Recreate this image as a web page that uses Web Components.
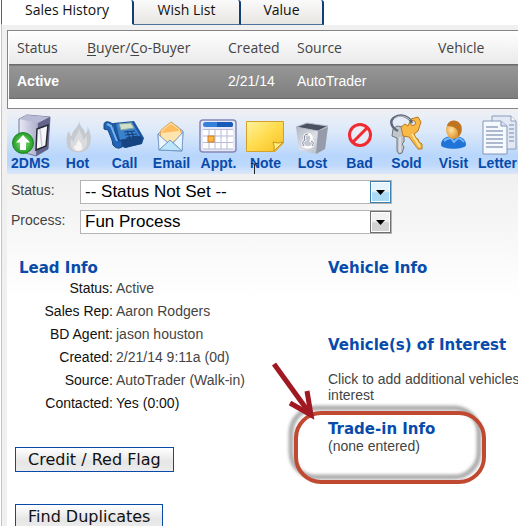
<!DOCTYPE html>
<html lang="en">
<head>
<meta charset="utf-8">
<title>Sales History</title>
<style>
html, body { margin: 0; height: 100%; }
body { overflow: hidden; background: #fff; font: 14px/16px "Liberation Sans", Arial, sans-serif; color: #444; }
</style>
</head>
<body>
<crm-page></crm-page>

<script>
const define = (name, html, setup) => customElements.define(name, class extends HTMLElement {
  constructor() {
    super();
    const t = document.createElement('template');
    t.innerHTML = html;
    this.attachShadow({ mode: 'open' }).append(t.content.cloneNode(true));
  }
  connectedCallback() { if (setup) setup(this, this.shadowRoot); }
});

define('crm-tab', `
<style>
  :host { display: block; }
  button { display: block; height: 25px; width: 100%; padding: 0 0 5px; border: solid #0f3f74; border-width: 0 2px 1px 0;
    border-bottom-color: #4c7299; border-radius: 0 3px 0 0; background: linear-gradient(#fafafa, #e8e6e2);
    font: 14px/19px "Open Sans", "Noto Sans", sans-serif; color: #111; }
  :host([selected]) button { background: #fff; border-bottom-color: #fff; border-left: 1px solid #3c6a98; }
</style>
<button type="button" role="tab"><slot></slot></button>`,
(h, r) => r.querySelector('button').setAttribute('aria-selected', h.hasAttribute('selected')));

define('crm-tabs', `
<style>
  :host { display: grid; grid-template-columns: 133px 107px 83px; padding-left: 1px; background: #fff; }
</style>
<slot></slot>`);

define('lead-table', `
<style>
  :host { display: block; border: solid #858585; border-width: 1px 0 1px 1px; background: #fff; padding: 0 0 9px 1px; }
  table { width: 100%; border-collapse: collapse; table-layout: fixed; text-align: left; }
  th, td { padding: 0 0 0 8px; white-space: nowrap; }
  th { height: 32px; font: 14px/20px "Open Sans", "Noto Sans", sans-serif; color: #444; padding-top: 1px; }
  thead { background: linear-gradient(#fff, #e9e9e9); }
  tbody { background: linear-gradient(#969696, #7e7e7e); color: #fff; border: solid #6c6c6c; border-width: 1px 0; }
  td { height: 31px; padding-bottom: 2px; }
  .s { width: 62px; } .b { width: 133px; } .c { width: 61px; }
  u { text-underline-offset: 2px; }
</style>
<table>
  <thead><tr><th class="s">Status</th><th class="b"><u>B</u>uyer/<u>C</u>o-Buyer</th><th class="c">Created</th><th class="b">Source</th><th>Vehicle</th></tr></thead>
  <tbody><tr><td><b>Active</b></td><td></td><td>2/21/14</td><td>AutoTrader</td><td></td></tr></tbody>
</table>`);

define('tool-bar', `
<style>
  :host { display: grid; grid-template-columns: repeat(10, 47px) 41px; overflow: hidden; padding: 2px 0 3px;
    background: linear-gradient(#f0f1f4, #dce9fa 35%, #b8d6fc 72%, #bcd8fc 86%, #dbe7f7); }
</style>
<slot></slot>`);

define('tool-item', `
<style>
  :host { display: block; position: relative; }
  button { display: flex; flex-direction: column; align-items: center; width: 100%; padding: 0; border: 0; background: none;
    font: bold 14px/16px "Liberation Sans", Arial, sans-serif; color: #084bab; white-space: nowrap; }
  .i { height: 44px; align-self: flex-start; }
</style>
<button type="button"><span class="i"><slot name="icon"></slot></span><span><slot></slot></span></button>
<slot name="over"></slot>`);

define('pick-list', `
<style>
  :host { display: grid; grid-template-columns: 69px minmax(0, 312px); align-items: start; }
  label { padding-top: 2px; }
  .box { position: relative; display: block; }
  select { appearance: none; display: block; box-sizing: border-box; width: 100%; height: 24px; margin: 0; padding: 0 24px 0 4px;
    border: 1px solid #b4b4b4; border-radius: 0; background: #fff; font: 17px/22px "Liberation Sans", Arial, sans-serif; color: #000; }
  .arrow { position: absolute; right: 1px; top: 1px; bottom: 1px; width: 21px; box-sizing: border-box; border: 1px solid #6f6f6f;
    box-shadow: inset 0 0 0 1px #fff; background: linear-gradient(#f2f2f2 45%, #d2d2d2 55%); pointer-events: none;
    display: flex; align-items: center; justify-content: center; }
  :host([hot]) .arrow { border-color: #3c7fb1; background: linear-gradient(#e6f5fd 45%, #a9dbf6 55%); }
</style>
<label for="s"></label>
<span class="box"><select id="s"><option></option></select>
<span class="arrow"><svg width="9" height="5" viewBox="0 0 9 5"><path d="M0 0h9L4.500 5z" fill="#000"/></svg></span></span>`,
(h, r) => { r.querySelector('label').textContent = h.getAttribute('label'); r.querySelector('option').textContent = h.getAttribute('value'); });

define('info-section', `
<style>
  :host { display: block; }
  h2 { margin: 0; font: bold 15px/18px "DejaVu Sans", Verdana, sans-serif; color: #084bab; white-space: nowrap; }
</style>
<h2><slot name="title"></slot></h2><slot></slot>`);

define('lead-fields', `
<style>
  :host { display: block; }
  dl { margin: 0; display: grid; grid-template-columns: 94px 1fr; column-gap: 3px; line-height: 23px; white-space: nowrap; }
  dt { text-align: right; color: #111; }
  dd { margin: 0; }
  .k { color: #111; }
</style>
<dl><dt>Status:</dt><dd>Active</dd><dt>Sales Rep:</dt><dd>Aaron Rodgers</dd><dt>BD Agent:</dt><dd>jason houston</dd>
<dt>Created:</dt><dd>2/21/14 9:11a (0d)</dd><dt>Source:</dt><dd>AutoTrader (Walk-in)</dd><dt>Contacted:</dt><dd class="k">Yes (0:00)</dd></dl>`);

define('action-button', `
<style>
  :host { display: block; }
  button { display: block; height: 25px; padding: 0 12px; border: 1px solid #084bab; background: linear-gradient(#fff, #e6e6e6 60%, #ececec);
    font: 16px/22px "DejaVu Sans", Verdana, sans-serif; color: #111; white-space: nowrap; }
</style>
<button type="button"><slot></slot></button>`);

define('call-out', `
<style>
  :host { position: absolute; left: -68px; top: -71px; pointer-events: none; }
  svg { display: block; }
</style>
<svg width="240" height="150" viewBox="260 350 240 150" aria-hidden="true">
  <defs><filter id="f" x="-10%" y="-20%" width="120%" height="140%"><feGaussianBlur stdDeviation="1.500"/></filter></defs>
  <rect x="291" y="409" width="188" height="69" rx="25" fill="none" stroke="#777" stroke-opacity=".6" stroke-width="5" filter="url(#f)"/>
  <rect x="296" y="414" width="188" height="69" rx="25" fill="none" stroke="#c04a31" stroke-width="4"/>
  <path d="M274 365L308 412" stroke="#a01822" stroke-width="5"/>
  <path d="M290 404L311 416L307 392" fill="none" stroke="#a01822" stroke-width="5"/>
</svg>`);

define('crm-page', `
<style>
  :host { display: flex; flex-direction: column; min-height: 100%; }
  main { flex: 1; display: flex; flex-direction: column; margin-left: 1px; padding: 5px 0 0 5px; border-left: 1px solid #c4c4c4; background: #f0f0f0; }
  .body { flex: 1; padding: 6px 0 12px 4px; background: linear-gradient(#f0f0f0, #fff 125px); }
  .picks { display: grid; gap: 6px; }
  .cols { display: grid; grid-template-columns: 309px 1fr; margin-top: 25px; }
  .left { padding-left: 8px; }
  .left action-button { margin: 32px 0 0 -4px; }
  .right { display: grid; align-content: start; padding-left: 8px; }
  .voi { margin-top: 59px; }
  p { margin: 0; }
  .voi p { padding-top: 17px; white-space: nowrap; }
  .trade { position: relative; margin-top: 17px; }
  .beam { position: absolute; left: 7px; top: 51px; pointer-events: none; }
  svg { display: block; }
</style>
<crm-tabs role="tablist"><crm-tab selected>Sales History</crm-tab><crm-tab>Wish List</crm-tab><crm-tab>Value</crm-tab></crm-tabs>
<main>
<lead-table></lead-table>
<tool-bar>
  <tool-item><svg slot="icon" width="47" height="46" viewBox="0 0 47 46">
    <defs><linearGradient id="tw"><stop stop-color="#e9e9f6"/><stop offset="1" stop-color="#8587ae"/></linearGradient>
    <radialGradient id="gr"><stop stop-color="#8be36c"/><stop offset="1" stop-color="#219a2a"/></radialGradient></defs>
    <path d="M12 8L20 4L43 6L41 38L29 45L12 40z" fill="url(#tw)" stroke="#777996"/><path d="M12 8L20 4L43 6L31 12z" fill="#b9bbd6"/>
    <path d="M31 12L43 6L41 38L29 45z" fill="#62648c"/><path d="M30 18L41 14L39 35L29 39z" fill="#f5f6fa" stroke="#252734" stroke-width="1.500"/>
    <path d="M33 18L35 36" stroke="#c8cad8" stroke-width="1.500"/>
    <circle cx="16" cy="32" r="10.500" fill="url(#gr)" stroke="#1f8a2a"/><path d="M16 24L23 31.500H19V39H13V31.500H9z" fill="#fff"/></svg>2DMS</tool-item>
  <tool-item><svg slot="icon" width="47" height="46" viewBox="0 0 47 46">
    <path d="M25 10C26 17 31 17 31 23C34 21 34 17 33 15C39 24 38 36 31 40C27 42 20 42 16 39C11 34 12 24 15 20C15 23 17 25 18 25C18 18 25 17 25 10z" fill="#c6c9d0"/>
    <path d="M25 17C26 23 29 24 29 29C31 28 32 26 32 24C35 32 32 39 27 40C18 42 15 35 17 28L20 31C20 25 25 23 25 17z" fill="#dadbdf"/>
    <path d="M24 28C26 31 29 33 28 38C25 42 19 39 20 34L22 35C22 32 24 31 24 28z" fill="#f5f4f3"/></svg>Hot</tool-item>
  <tool-item><svg slot="icon" width="47" height="46" viewBox="0 0 47 46">
    <path d="M12 12L33 10L43 27L41 33L24 37L14 33z" fill="#1d559f"/><path d="M15 13L31 11L39 25L19 29z" fill="#3a82cd"/>
    <path d="M18 13L30 12L33 17L20 19z" fill="#cfe0c9" stroke="#8aa59b"/><path d="M19 29L39 25L42 28L40 33L24 37z" fill="#174380"/>
    <path d="M23 21L34 20M24 24L36 23M25 27L37 25M26 20L29 27M30 20L33 27" stroke="#163e78" stroke-width="1.200"/>
    <path d="M3 14Q3 10 8 11L12 13L12 18L17 29L21 30L21 36Q16 39 12 34L11 29L7 19L3 18z" fill="#2265b7" stroke="#15427e"/>
    <path d="M6 13L10 15L16 30" stroke="#79b5ed" stroke-width="2" fill="none"/></svg>Call</tool-item>
  <tool-item><svg slot="icon" width="47" height="46" viewBox="0 0 47 46">
    <path d="M10 23L23 11L35 20L34 40L11 39z" fill="#c2d8ef" stroke="#8299ba"/>
    <path d="M13 19L23 11L32 18L34 24L23 33L12 27z" fill="#ffe5ad" stroke="#e4a14d"/><path d="M15 19L23 13L30 18L31 20L14 22z" fill="#ffbd61"/>
    <path d="M10 23L20 32L11 39zM35 21L25 32L34 40z" fill="#e9f5ff" stroke="#7b9fc7"/>
    <path d="M11 39L22 29L34 40z" fill="#bde5fb" stroke="#6f99c5"/></svg>Email</tool-item>
  <tool-item><svg slot="icon" width="47" height="46" viewBox="0 0 47 46">
    <rect x="5" y="9" width="36" height="32" rx="3" fill="#e6e8f6" stroke="#8587b4" stroke-width="1.500"/>
    <rect x="8" y="11" width="30" height="5" rx="2.500" fill="#347fd9"/><path d="M22 11h14q2 0 2 2.500t-2 2.500H22z" fill="#1959b7"/>
    <path d="M8 18h30v20H8z" fill="#fff"/><path d="M8 18.500h30M8 25h30M8 31.500h30M8 38h30M14 18v20M20 18v20M26 18v20M32 18v20" stroke="#b7bad8"/>
    <rect x="13" y="25" width="6" height="6" fill="#ffb53f" stroke="#ce7d1d"/></svg>Appt.</tool-item>
  <tool-item><svg slot="icon" width="47" height="46" viewBox="0 0 47 46">
    <defs><linearGradient id="nt" x2="1" y2="1"><stop stop-color="#fff2a0"/><stop offset=".5" stop-color="#ffdc4d"/><stop offset="1" stop-color="#f5bd23"/></linearGradient></defs>
    <path d="M4.500 10.500H41.500V32L33 40.500H4.500z" fill="url(#nt)" stroke="#d5a12d"/><path d="M31 31Q36 33 41 31L32 40Q33 36 31 31z" fill="#ffec80" stroke="#c9981d"/></svg>Note
    <svg slot="over" class="beam" width="11" height="17" viewBox="0 0 11 17"><path d="M2 1.500h2l1.500 1L7 1.500h2M5.500 2v13M2 15.500h2l1.500-1L7 15.500h2" fill="none" stroke="#222"/></svg></tool-item>
  <tool-item><svg slot="icon" width="47" height="46" viewBox="0 0 47 46">
    <defs><linearGradient id="bn" x2="1" y2="1"><stop stop-color="#a9afbc"/><stop offset=".5" stop-color="#dde0e7"/><stop offset="1" stop-color="#a4aab8"/></linearGradient></defs>
    <path d="M7 16L18 12L39 15L36 38L27 43L10 39z" fill="url(#bn)"/><path d="M7 16L18 12L39 15L29 20z" fill="#4a5261" stroke="#b8bfca"/>
    <path d="M29 20L39 16L36 38L27 43z" fill="#959baa"/>
    <path d="M15 35Q12 31 16 29Q14 23 19 23Q24 24 22 30Q26 31 23 35Q19 38 15 35z" fill="#c3c8d2" stroke="#fff" stroke-width="2.500"/><path d="M15 35Q12 31 16 29Q14 23 19 23M22 30Q26 31 23 35" fill="none" stroke="#727b8e"/></svg>Lost</tool-item>
  <tool-item><svg slot="icon" width="47" height="46" viewBox="0 0 47 46">
    <circle cx="24" cy="24" r="10.500" fill="#f4eff4" fill-opacity=".6" stroke="#f02c32" stroke-width="3"/><path d="M16.500 31.500L31.500 16.500" stroke="#f02c32" stroke-width="3"/></svg>Bad</tool-item>
  <tool-item><svg slot="icon" width="47" height="46" viewBox="0 0 47 46">
    <path d="M10 18L14 15L20 16L23 22L21 26L21 31L19 33L21 36L19 42L16 43L14 40V27L9 25z" fill="#c1c5cc" stroke="#71767f"/><path d="M17 26V41" stroke="#f2f3f5"/>
    <path d="M18 16L22 13L25 15L28 8L35 6L38 11L35 20L31 23L33 27L35 28L36 31L39 33L39 38L35 38L26 26L20 25z" fill="#f8b947" stroke="#bd7918"/><path d="M29 23L37 36" stroke="#ffe5a2" stroke-width="1.500"/>
    <circle cx="30" cy="12" r="2.500" fill="#dceaff" stroke="#bd7918"/>
    <path d="M29 12C26 5 18 3 12 6C5 10 9 17 15 20" fill="none" stroke="#5f6978" stroke-width="2.500"/><path d="M27 9C22 4 15 4 11 8" fill="none" stroke="#c7ced8"/></svg>Sold</tool-item>
  <tool-item><svg slot="icon" width="47" height="46" viewBox="0 0 47 46">
    <defs><radialGradient id="hd" cx=".35"><stop stop-color="#ffe3a3"/><stop offset="1" stop-color="#e3962d"/></radialGradient></defs>
    <path d="M11 34C11 27 17 25 23 25C30 25 36 27 36 34C35 39 12 39 11 34z" fill="#2074d8"/><path d="M14 30Q17 27 21 27L24 31L28 27Q32 28 34 31" fill="none" stroke="#75b7fa" stroke-width="2"/>
    <ellipse cx="23.500" cy="19" rx="7.500" ry="9" fill="url(#hd)"/><path d="M17 15C18 9 27 7 31 14C33 19 31 24 28 26C29 19 26 15 17 15z" fill="#bf7520"/></svg>Visit</tool-item>
  <tool-item><svg slot="icon" width="47" height="46" viewBox="0 0 47 46">
    <path d="M15 5H34L39 10V38H15z" fill="#e2e9f5" stroke="#8b9cba"/><path d="M34 5V10H39" fill="#fff" stroke="#8b9cba"/>
    <path d="M32 14h5M32 18h5M32 22h5M32 26h5M32 30h5" stroke="#9cabc6" stroke-width="1.500"/>
    <path d="M6 10H24L30 15V43H6z" fill="#f5f8fd" stroke="#8496b6"/><path d="M24 10V15H30" fill="#d5dfef" stroke="#8496b6"/>
    <path d="M9 16h12M9 20h17M9 24h17M9 28h17M9 32h17M9 36h17" stroke="#92a2be" stroke-width="1.500"/></svg>Letter</tool-item>
</tool-bar>
<div class="body">
  <div class="picks">
    <pick-list hot label="Status:" value="-- Status Not Set --"></pick-list>
    <pick-list label="Process:" value="Fun Process"></pick-list>
  </div>
  <div class="cols">
    <div class="left">
      <info-section><span slot="title">Lead Info</span><lead-fields></lead-fields></info-section>
      <action-button>Credit / Red Flag</action-button>
      <action-button>Find Duplicates</action-button>
    </div>
    <div class="right">
      <info-section><span slot="title">Vehicle Info</span></info-section>
      <info-section class="voi"><span slot="title">Vehicle(s) of Interest</span><p>Click to add additional vehicles<br>interest</p></info-section>
      <info-section class="trade"><span slot="title">Trade-in Info</span><p>(none entered)</p><call-out></call-out></info-section>
    </div>
  </div>
</div>
</main>`);
</script>
</body>
</html>
